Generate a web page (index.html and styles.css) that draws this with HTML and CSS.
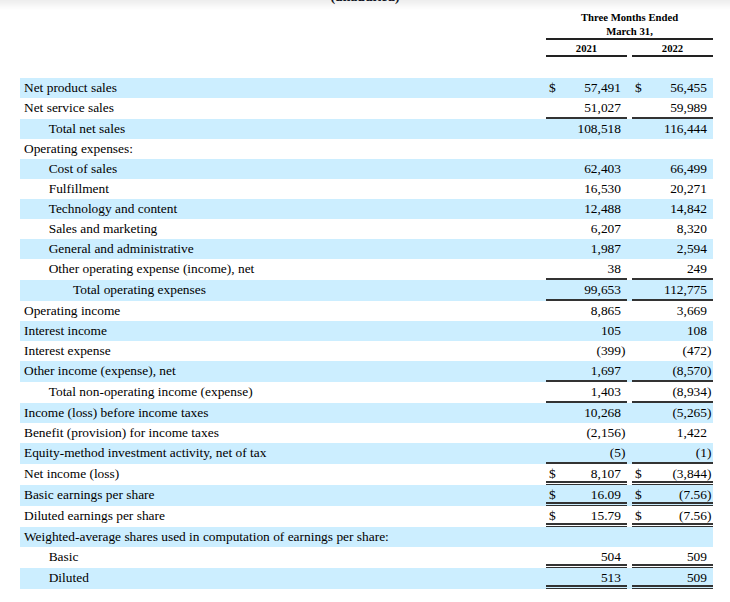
FILE: index.html
```html
<!DOCTYPE html>
<html lang="en">
<head>
<meta charset="utf-8">
<title>Consolidated Statements of Operations</title>
<link rel="stylesheet" href="styles.css">
</head>
<body>
<div class="shade"></div>
<div class="unaudited">(unaudited)</div>
<div class="sheet">
  <div class="head">
    <div></div>
    <div class="period">Three Months Ended<br>March 31,</div>
  </div>
  <div class="years">
    <div></div>
    <div class="yr">2021</div>
    <div></div>
    <div class="yr">2022</div>
  </div>

  <div class="rows">
    <div class="row b"><div class="lbl">Net product sales</div><div class="num"><span class="d">$</span><span class="v">57,491</span><span class="p"></span></div><div></div><div class="num"><span class="d">$</span><span class="v">56,455</span><span class="p"></span></div></div>
    <div class="row u"><div class="lbl">Net service sales</div><div class="num"><span class="v">51,027</span><span class="p"></span></div><div></div><div class="num"><span class="v">59,989</span><span class="p"></span></div></div>
    <div class="row b"><div class="lbl i1">Total net sales</div><div class="num"><span class="v">108,518</span><span class="p"></span></div><div></div><div class="num"><span class="v">116,444</span><span class="p"></span></div></div>
    <div class="row"><div class="lbl">Operating expenses:</div><div class="num"></div><div></div><div class="num"></div></div>
    <div class="row b"><div class="lbl i1">Cost of sales</div><div class="num"><span class="v">62,403</span><span class="p"></span></div><div></div><div class="num"><span class="v">66,499</span><span class="p"></span></div></div>
    <div class="row"><div class="lbl i1">Fulfillment</div><div class="num"><span class="v">16,530</span><span class="p"></span></div><div></div><div class="num"><span class="v">20,271</span><span class="p"></span></div></div>
    <div class="row b"><div class="lbl i1">Technology and content</div><div class="num"><span class="v">12,488</span><span class="p"></span></div><div></div><div class="num"><span class="v">14,842</span><span class="p"></span></div></div>
    <div class="row"><div class="lbl i1">Sales and marketing</div><div class="num"><span class="v">6,207</span><span class="p"></span></div><div></div><div class="num"><span class="v">8,320</span><span class="p"></span></div></div>
    <div class="row b"><div class="lbl i1">General and administrative</div><div class="num"><span class="v">1,987</span><span class="p"></span></div><div></div><div class="num"><span class="v">2,594</span><span class="p"></span></div></div>
    <div class="row u"><div class="lbl i1">Other operating expense (income), net</div><div class="num"><span class="v">38</span><span class="p"></span></div><div></div><div class="num"><span class="v">249</span><span class="p"></span></div></div>
    <div class="row b u"><div class="lbl i2">Total operating expenses</div><div class="num"><span class="v">99,653</span><span class="p"></span></div><div></div><div class="num"><span class="v">112,775</span><span class="p"></span></div></div>
    <div class="row"><div class="lbl">Operating income</div><div class="num"><span class="v">8,865</span><span class="p"></span></div><div></div><div class="num"><span class="v">3,669</span><span class="p"></span></div></div>
    <div class="row b"><div class="lbl">Interest income</div><div class="num"><span class="v">105</span><span class="p"></span></div><div></div><div class="num"><span class="v">108</span><span class="p"></span></div></div>
    <div class="row"><div class="lbl">Interest expense</div><div class="num"><span class="v">(399</span><span class="p">)</span></div><div></div><div class="num"><span class="v">(472</span><span class="p">)</span></div></div>
    <div class="row b u"><div class="lbl">Other income (expense), net</div><div class="num"><span class="v">1,697</span><span class="p"></span></div><div></div><div class="num"><span class="v">(8,570</span><span class="p">)</span></div></div>
    <div class="row u"><div class="lbl i1">Total non-operating income (expense)</div><div class="num"><span class="v">1,403</span><span class="p"></span></div><div></div><div class="num"><span class="v">(8,934</span><span class="p">)</span></div></div>
    <div class="row b"><div class="lbl">Income (loss) before income taxes</div><div class="num"><span class="v">10,268</span><span class="p"></span></div><div></div><div class="num"><span class="v">(5,265</span><span class="p">)</span></div></div>
    <div class="row"><div class="lbl">Benefit (provision) for income taxes</div><div class="num"><span class="v">(2,156</span><span class="p">)</span></div><div></div><div class="num"><span class="v">1,422</span><span class="p"></span></div></div>
    <div class="row b u"><div class="lbl">Equity-method investment activity, net of tax</div><div class="num"><span class="v">(5</span><span class="p">)</span></div><div></div><div class="num"><span class="v">(1</span><span class="p">)</span></div></div>
    <div class="row w"><div class="lbl">Net income (loss)</div><div class="num"><span class="d">$</span><span class="v">8,107</span><span class="p"></span></div><div></div><div class="num"><span class="d">$</span><span class="v">(3,844</span><span class="p">)</span></div></div>
    <div class="row b w"><div class="lbl">Basic earnings per share</div><div class="num"><span class="d">$</span><span class="v">16.09</span><span class="p"></span></div><div></div><div class="num"><span class="d">$</span><span class="v">(7.56</span><span class="p">)</span></div></div>
    <div class="row w"><div class="lbl">Diluted earnings per share</div><div class="num"><span class="d">$</span><span class="v">15.79</span><span class="p"></span></div><div></div><div class="num"><span class="d">$</span><span class="v">(7.56</span><span class="p">)</span></div></div>
    <div class="row b"><div class="lbl">Weighted-average shares used in computation of earnings per share:</div><div class="num"></div><div></div><div class="num"></div></div>
    <div class="row w"><div class="lbl i1">Basic</div><div class="num"><span class="v">504</span><span class="p"></span></div><div></div><div class="num"><span class="v">509</span><span class="p"></span></div></div>
    <div class="row b w"><div class="lbl i1">Diluted</div><div class="num"><span class="v">513</span><span class="p"></span></div><div></div><div class="num"><span class="v">509</span><span class="p"></span></div></div>
  </div>
</div>
</body>
</html>
```

FILE: styles.css
```css
html, body {
  margin: 0;
  padding: 0;
  background: #ffffff;
}

body {
  font-family: "Liberation Serif", "Times New Roman", serif;
  color: #000000;
  overflow: hidden;
}

.shade {
  position: fixed;
  top: 0;
  left: 0;
  right: 0;
  height: 10px;
  background: linear-gradient(rgba(0, 0, 0, 0.07), rgba(0, 0, 0, 0));
  pointer-events: none;
}

.unaudited {
  margin-top: -11px;
  height: 16px;
  line-height: 16px;
  font-size: 13.8px;
  font-weight: bold;
  text-align: center;
  color: #141826;
}

.sheet {
  margin-left: 20px;
  width: 693px;
}

.head,
.years,
.row {
  display: grid;
  grid-template-columns: 526px 81px 5px 81px;
}

.period {
  grid-column: 2 / 5;
  padding-top: 5px;
  font-size: 10.7px;
  line-height: 14px;
  font-weight: bold;
  text-align: center;
  border-bottom: 2px solid #222222;
}

.yr {
  padding-top: 2px;
  font-size: 10.7px;
  line-height: 13px;
  font-weight: bold;
  text-align: center;
  border-bottom: 2px solid #222222;
}

.rows {
  margin-top: 21px;
}

.row {
  --bg: #ffffff;
  height: 20px;
  grid-template-rows: 100%;
  font-size: 13.4px;
  line-height: 20px;
  background: var(--bg);
}

.row.b {
  --bg: #cceeff;
}

.row.u,
.row.w {
  height: 21px;
}

.lbl {
  padding-left: 4px;
  white-space: nowrap;
}

.lbl.i1 {
  padding-left: 28.7px;
}

.lbl.i2 {
  padding-left: 53px;
}

.num {
  display: flex;
  box-sizing: border-box;
  padding-left: 3px;
  white-space: nowrap;
}

.d {
  width: 8px;
}

.v {
  flex: 1;
  text-align: right;
}

.p {
  width: 6px;
  text-align: left;
}

.row.u .num {
  border-bottom: 2px solid #333333;
}

.row.w .num {
  border-bottom: 1px solid #333333;
  box-shadow: inset 0 -1px 0 var(--bg), inset 0 -3px 0 #333333;
}
```
